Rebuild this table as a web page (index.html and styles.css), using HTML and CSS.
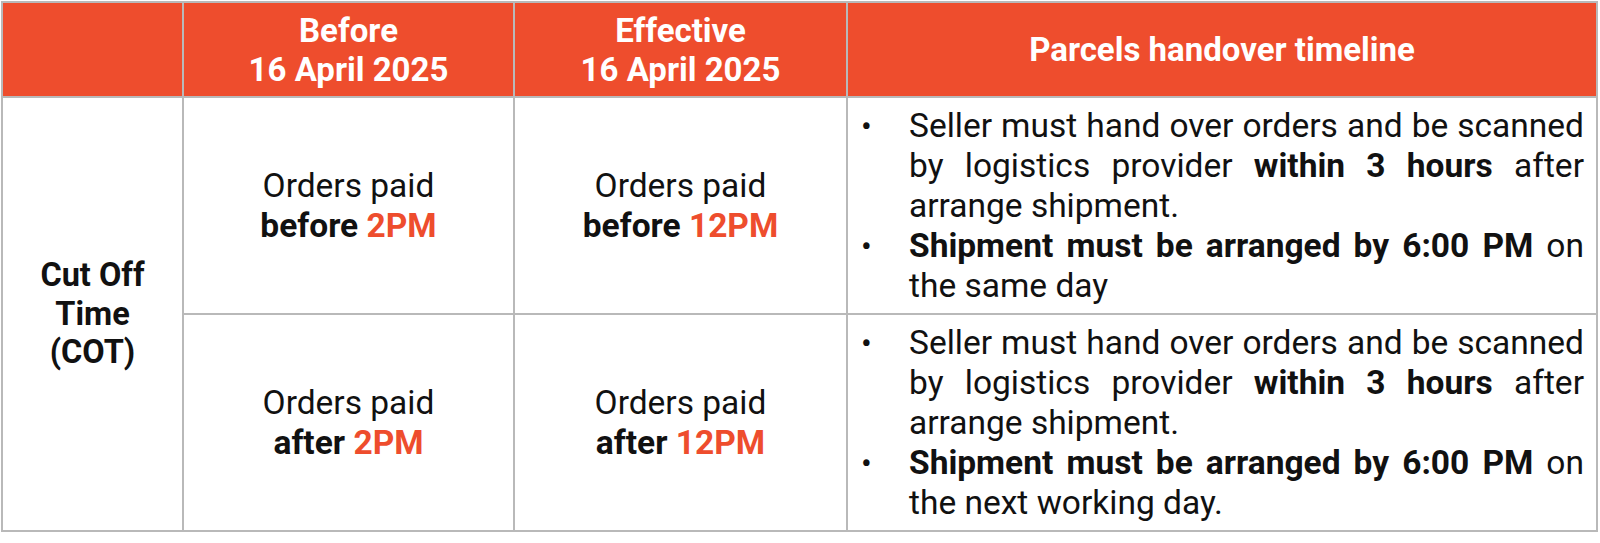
FILE: index.html
```html
<!DOCTYPE html>
<html>
<head>
<meta charset="utf-8">
<link rel="stylesheet" href="styles.css">
</head>
<body>
<table class="cot">
  <colgroup>
    <col class="c1"><col class="c2"><col class="c3"><col class="c4">
  </colgroup>
  <thead>
    <tr>
      <th></th>
      <th>Before<br>16 April 2025</th>
      <th>Effective<br>16 April 2025</th>
      <th>Parcels handover timeline</th>
    </tr>
  </thead>
  <tbody>
    <tr>
      <td rowspan="2" class="label">Cut Off Time (COT)</td>
      <td class="mid">Orders paid<br><b>before <span class="hl">2PM</span></b></td>
      <td class="mid">Orders paid<br><b>before <span class="hl">12PM</span></b></td>
      <td class="list">
        <ul>
          <li>Seller must hand over orders and be scanned by logistics provider <b>within 3 hours</b> after arrange shipment.</li>
          <li><b>Shipment must be arranged by 6:00 PM</b> on the same day</li>
        </ul>
      </td>
    </tr>
    <tr>
      <td class="mid">Orders paid<br><b>after <span class="hl">2PM</span></b></td>
      <td class="mid">Orders paid<br><b>after <span class="hl">12PM</span></b></td>
      <td class="list">
        <ul>
          <li>Seller must hand over orders and be scanned by logistics provider <b>within 3 hours</b> after arrange shipment.</li>
          <li><b>Shipment must be arranged by 6:00 PM</b> on the next working day.</li>
        </ul>
      </td>
    </tr>
  </tbody>
</table>
</body>
</html>
```
FILE: styles.css
```css
html, body {
  margin: 0;
  padding: 0;
  background: #ffffff;
}
body {
  padding: 1px 0 0 1px;
  font-family: Roboto, "Liberation Sans", Arial, sans-serif;
  color: #111111;
}
.cot {
  border-collapse: collapse;
  table-layout: fixed;
  width: 1597px;
  font-size: 33.5px;
  line-height: 40px;
}
.c1 { width: 181px; }
.c2 { width: 331px; }
.c3 { width: 333px; }
.c4 { width: 750px; }
.cot th, .cot td {
  border: 2px solid #b9b9b9;
  padding: 0;
}
.cot th {
  background: #ee4d2d;
  color: #ffffff;
  font-weight: 700;
  font-size: 33px;
  text-align: center;
  vertical-align: middle;
  height: 93px;
  line-height: 39px;
}
.cot td {
  text-align: center;
  vertical-align: middle;
}
.cot td.label {
  font-weight: 700;
  font-size: 32.5px;
  line-height: 38.5px;
  padding: 0 22px;
}
.cot td.mid {
  font-weight: 400;
}
.mid b {
  font-weight: 700;
}
.hl {
  color: #ee4d2d;
}
.cot td.list {
  text-align: left;
  padding: 8px 12px 7px 0;
}
.list ul {
  list-style: none;
  margin: 0;
  padding: 0;
}
.list li {
  padding-left: 61px;
  text-align: justify;
}
.list li::before {
  content: "•";
  display: inline-block;
  box-sizing: border-box;
  width: 61px;
  margin-left: -61px;
  padding-left: 13px;
  text-align: left;
  font-size: 32px;
  line-height: 40px;
}
.list b {
  font-weight: 700;
}
```
